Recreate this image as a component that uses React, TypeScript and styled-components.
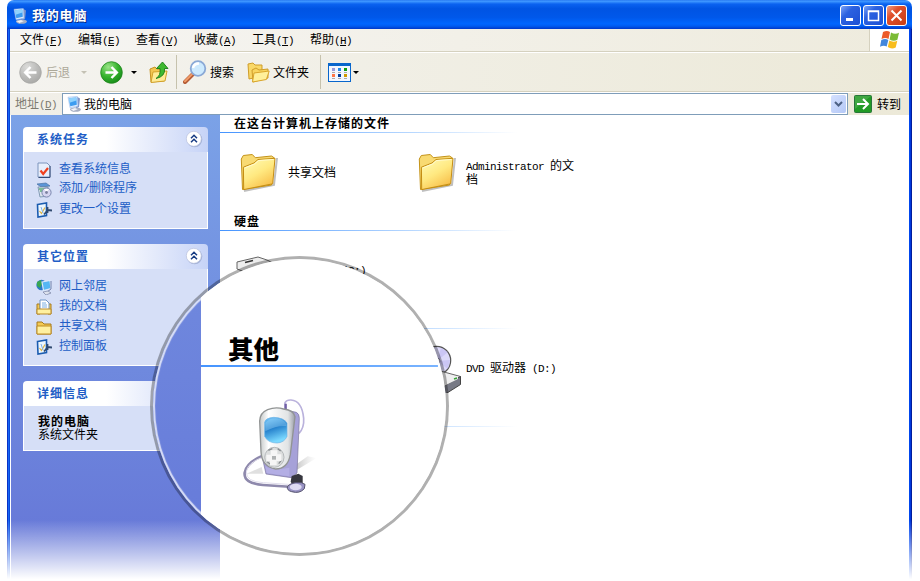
import React from "react";
import styled, { createGlobalStyle } from "styled-components";

const GlobalStyle = createGlobalStyle`
  * { box-sizing: border-box; }
  html, body { margin: 0; background: #fff; }
  body {
    font-family: "Noto Sans CJK SC", sans-serif;
    font-size: 12px;
    line-height: 12px;
    color: #000;
  }
  svg { display: block; flex: none; }
`;

const Screen = styled.div`
  position: relative;
  width: 920px;
  height: 581px;
  overflow: hidden;
`;

const WindowFrame = styled.div`
  display: flex;
  flex-direction: column;
  width: 905px;
  height: 581px;
  margin-left: 7px;
`;

const TitleBar = styled.header`
  display: flex;
  align-items: center;
  flex: none;
  height: 29px;
  padding: 2px 5px 0 5px;
  border-radius: 7px 7px 0 0;
  background: linear-gradient(#2a7cf2 0, #3c95ff 5%, #0a62f0 14%, #0054e3 30%, #0058ea 60%, #0066ff 82%, #005bf0 90%, #0038c8 100%);
`;

const WindowTitle = styled.h1`
  flex: 1;
  margin: -1px 0 0 4px;
  font-size: 13px;
  line-height: 16px;
  letter-spacing: 0.8px;
  font-weight: 700;
  color: #fff;
  text-shadow: 1px 1px 0 #0a2a80;
`;

const CaptionButton = styled.button<{ $close?: boolean }>`
  display: flex;
  align-items: center;
  justify-content: center;
  width: 21px;
  height: 21px;
  margin-left: 2px;
  padding: 0;
  border: 1px solid #fff;
  border-radius: 3px;
  background: ${(p) =>
    p.$close
      ? "linear-gradient(135deg, #f0a088, #e0502c 35%, #c83c14)"
      : "linear-gradient(135deg, #7ca4f8, #2c62e0 35%, #1c4fd4)"};
`;

const Frame = styled.div`
  display: flex;
  flex-direction: column;
  flex: 1;
  min-height: 0;
  padding: 0 3px;
  background:
    linear-gradient(90deg, #0a30c8 1px, #1467f4 1px 2px, #0848dc 2px) left / 3px 100% no-repeat,
    linear-gradient(90deg, #0046ee 1px, #0038dc 1px 2px, #001c9c 2px) right / 3px 100% no-repeat,
    #fff;
`;

const MenuBar = styled.nav`
  display: flex;
  flex: none;
  height: 23px;
  background: linear-gradient(90deg, #f6f5f3, #eeebdd);
  border-bottom: 1px solid #d5d1bf;
`;

const MenuItems = styled.div`
  display: flex;
  flex: 1;
  align-items: center;
  gap: 16px;
  padding-left: 10px;
  border-right: 1px solid #d5d1bf;
`;

const Latin = styled.span`
  font-family: "Liberation Mono", monospace;
  font-size: 11px;
  letter-spacing: -0.6px;
  white-space: pre;
  u { text-underline-offset: 1px; }
`;

const MenuItem = styled.div`
  width: 42px;
  white-space: nowrap;
`;

const FlagBox = styled.div`
  display: flex;
  justify-content: center;
  width: 39px;
  padding-top: 1px;
  background: #fff;
`;

const ToolBar = styled.div`
  display: flex;
  align-items: center;
  flex: none;
  height: 40px;
  padding-left: 9px;
  border-top: 1px solid #fff;
  border-bottom: 1px solid #d5d1bf;
  background: linear-gradient(90deg, #f4f3ef, #ece9d8);
`;

const ToolButton = styled.div<{ $gap: number; $disabled?: boolean; $space?: number }>`
  display: flex;
  align-items: center;
  gap: ${(p) => p.$space ?? 4}px;
  margin-left: ${(p) => p.$gap}px;
  color: ${(p) => (p.$disabled ? "#aca899" : "#000")};
  white-space: nowrap;
`;

const ToolLabel = styled.span`
  margin-top: -1px;
`;

const Caret = styled.span<{ $gap: number; $disabled?: boolean }>`
  width: 0;
  height: 0;
  margin-left: ${(p) => p.$gap}px;
  border: 3px solid transparent;
  border-top-color: ${(p) => (p.$disabled ? "#c4c1b4" : "#000")};
  border-bottom: 0;
`;

const Divider = styled.span<{ $gap: number }>`
  width: 1px;
  height: 34px;
  margin-left: ${(p) => p.$gap}px;
  background: #c6c2ad;
`;

const AddressBar = styled.div`
  display: flex;
  align-items: center;
  flex: none;
  height: 23px;
  padding-left: 5px;
  border-top: 1px solid #fff;
  background: linear-gradient(90deg, #f1efe8, #ece9d8);
`;

const AddressLabel = styled.label`
  width: 47px;
  color: #7c7a70;
  white-space: nowrap;
`;

const AddressField = styled.div`
  display: flex;
  align-items: center;
  width: 786px;
  height: 22px;
  padding: 0 1px 0 3px;
  border: 1px solid #7f9db9;
  background: #fff;
`;

const AddressText = styled.span`
  flex: 1;
  margin-left: 2px;
`;

const DropButton = styled.span`
  display: flex;
  align-items: center;
  justify-content: center;
  width: 15px;
  height: 18px;
  border-radius: 2px;
  background: linear-gradient(135deg, #d4e0ff, #b4c8f6);
`;

const GoButton = styled.div`
  display: flex;
  align-items: center;
  gap: 5px;
  margin-left: 6px;
`;

const Body = styled.main`
  display: flex;
  flex: 1;
  min-height: 0;
  margin-left: 1px;
`;

const SideBar = styled.aside`
  display: flex;
  flex-direction: column;
  gap: 15px;
  width: 209px;
  padding: 12px 12px 0;
  background: linear-gradient(#7ba2e7, #6779d8 90%, #6375d6);
`;

const PanelHeader = styled.div`
  display: flex;
  align-items: center;
  justify-content: space-between;
  height: 25px;
  padding: 0 5px 1px 14px;
  border-radius: 4px 4px 0 0;
  background: linear-gradient(90deg, #fff 45%, #c6d3f7);
`;

const PanelTitle = styled.h2`
  margin: 0;
  font-size: 12px;
  line-height: 14px;
  letter-spacing: 1px;
  color: #215dc6;
`;

const PanelBody = styled.div<{ $details?: boolean }>`
  padding: ${(p) => (p.$details ? "10px 0 10px 14px" : "6px 0 10px 12px")};
  border: 1px solid #fff;
  border-top: 0;
  background: #d6dff7;
`;

const TaskRow = styled.div`
  display: flex;
  align-items: center;
  gap: 7px;
  height: 20px;
  color: #215dc6;
  svg { margin-top: 3px; }
`;

const TaskLabel = styled.span`
  margin-top: -1px;
`;

const DetailName = styled.div`
  margin: -1px 0 1px;
  font-size: 12px;
  letter-spacing: 1px;
  font-weight: 700;
`;

const Content = styled.section`
  flex: 1;
  background: #fff;
`;

const Group = styled.div`
  height: 98px;
`;

const GroupTitle = styled.h3`
  height: 17px;
  margin: 0;
  padding: 1px 0 0 14px;
  font-size: 12px;
  line-height: 14px;
  letter-spacing: 1px;
`;

const Rule = styled.div`
  width: 297px;
  height: 1px;
  background: linear-gradient(90deg, #4594ff, #b8d8ff 65%, #fff);
`;

const Items = styled.div`
  display: grid;
  grid-template-columns: 178px 178px;
  height: 80px;
  align-items: center;
  padding-left: 19px;
`;

const Item = styled.div<{ $column?: number }>`
  grid-column: ${(p) => p.$column ?? "auto"};
  display: flex;
  align-items: center;
`;

const ItemName = styled.div`
  width: 112px;
  margin: -3px 0 0 1px;
`;

const BottomFade = styled.div`
  position: absolute;
  left: 0;
  right: 0;
  bottom: 0;
  height: 61px;
  background: linear-gradient(rgba(255, 255, 255, 0), #fff 97%);
`;

/* Magnifying lens floating above the window */
const Lens = styled.div`
  position: absolute;
  left: 150px;
  top: 256px;
  display: flex;
  width: 299px;
  height: 300px;
  border: 3px solid rgba(0, 0, 0, 0.31);
  border-radius: 50%;
  overflow: hidden;
  background: #fff padding-box;
  &::after {
    content: "";
    position: absolute;
    inset: 0;
    border-radius: 50%;
    box-shadow: inset 0 0 1px 2px rgba(255, 255, 255, 0.75);
  }
`;

const LensSide = styled.div`
  width: 48px;
  background: linear-gradient(#7089de, #667ad9);
`;

const LensMain = styled.div`
  flex: 1;
  padding-top: 74px;
`;

const LensTitle = styled.h2`
  height: 32px;
  margin: 0;
  padding-left: 27px;
  font-size: 25.5px;
  line-height: 29px;
  font-weight: 900;
`;

const LensRule = styled.div`
  width: 237px;
  height: 2px;
  margin-bottom: 30px;
  background: linear-gradient(90deg, #4594ff, #7ab4ff);
`;

const LensPicture = styled.div`
  padding-left: 39px;
`;

const Computer = ({ size = 16 }: { size?: number }) => (
  <svg width={size} height={size} viewBox="0 0 16 16">
    <ellipse cx="9.5" cy="13.6" rx="5.5" ry="2.2" fill="#a6aec2" />
    <path d="M11 .8l3 1.7-1 8.500-3 1.500z" fill="#7f95c8" />
    <path d="M2 1.2L11.300.4l.7 9.800L4 11.800z" fill="#dceafd" stroke="#8fb4ea" strokeWidth=".5" />
    <path d="M2.800 2.200l7.500-.7.500 7.300-6.500 1.400z" fill="#3d9cf0" />
    <path d="M2.800 2.200l7.500-.7.200 3-7 2.200z" fill="#8fd2fd" />
    <path d="M4 13.200l5-1.500 3.500 1.500-5 2z" fill="#f1f3f8" stroke="#9aa4bc" strokeWidth=".5" />
  </svg>
);

const Flag = () => (
  <svg width="20" height="19" viewBox="0 0 20 19">
    <path d="M3 2q4-2 7 0L8.5 9q-3-2-7 0z" fill="#ec5b29" />
    <path d="M11 2.5q4 2.3 8 .3l-1.6 7q-4 2-7.8-.3z" fill="#7bbb35" />
    <path d="M1.3 10q4-2 7 0l-1.6 6.5q-3-1.8-6.7.2z" fill="#4387dc" />
    <path d="M9.3 10.6q4 2.2 8 .2l-1.6 6.7q-4 2-7.9-.4z" fill="#f8bd1c" />
  </svg>
);

const CircleArrow = ({ back }: { back?: boolean }) => (
  <svg width="23" height="23" viewBox="0 0 23 23">
    <defs>
      <radialGradient id={back ? "orbGray" : "orbGreen"} cx=".35" cy=".25" r=".8">
        <stop offset="0" stopColor={back ? "#dcdcda" : "#9be488"} />
        <stop offset=".55" stopColor={back ? "#bdbdbb" : "#37b42f"} />
        <stop offset="1" stopColor={back ? "#a8a8a6" : "#158a19"} />
      </radialGradient>
    </defs>
    <circle cx="11.5" cy="11.5" r="10.8" fill={`url(#${back ? "orbGray" : "orbGreen"})`} stroke={back ? "#a9a9a7" : "#23861f"} strokeWidth=".8" />
    <path
      d={back ? "M17.5 11.5H6.5M11.5 6l-5.3 5.5 5.3 5.5" : "M5.5 11.5h11M11.5 6l5.3 5.5-5.3 5.5"}
      fill="none"
      stroke="#fff"
      strokeWidth="2.5"
    />
  </svg>
);

const UpFolder = () => (
  <svg width="20" height="23" viewBox="0 0 20 23">
    <path d="M1 8l5-2 2 2h7v12l-13 1z" fill="#f3c650" stroke="#c69323" />
    <path d="M4 11l14-1-2 10-14 1.5z" fill="#ffeb96" stroke="#d2a12a" />
    <path d="M7 17.500q5-3 4-10H7.500L13.500 1 19 7.500h-3.500q1 8-8.500 10z" fill="#3fb931" stroke="#187e17" strokeWidth=".9" />
  </svg>
);

const Search = () => (
  <svg width="24" height="24" viewBox="0 0 24 24">
    <path d="M2 22l8-8" stroke="#b35a35" strokeWidth="4" strokeLinecap="round" />
    <path d="M2 21.2l7.5-7.5" stroke="#f09b67" strokeWidth="2" strokeLinecap="round" />
    <circle cx="15" cy="8.5" r="7.3" fill="#cdeafe" stroke="#8ba9d6" strokeWidth="1.8" />
    <path d="M10 8q1-4.5 6-4.5" stroke="#fff" strokeWidth="2.5" fill="none" />
  </svg>
);

const Folders = () => (
  <svg width="23" height="21" viewBox="0 0 23 21">
    <path d="M1 2l5-1 2 2h7v11L2 17z" fill="#f9d867" stroke="#cf9d2a" />
    <path d="M5 8l4-2 3 2 9-1v9L6 20z" fill="#f8d55f" stroke="#cf9d2a" />
    <path d="M7 11l15.2-2-2.8 8.5L5.5 20z" fill="#fff09a" stroke="#d9a62c" />
  </svg>
);

const Views = () => (
  <svg width="23" height="19" viewBox="0 0 23 19">
    <rect x=".5" y=".5" width="22" height="18" fill="#f2f7ff" stroke="#0866cc" />
    <path d="M0 0h23v3H0z" fill="#0866cc" />
    {["#9a9ad8", "#2689e6", "#10a010", "#ff7747", "#003c9c", "#d09a00"].map((color, i) => (
      <g key={color} fill={color}>
        <rect x={4 + (i % 3) * 6} y={5 + Math.floor(i / 3) * 6} width="3" height="3" />
        <rect x={4 + (i % 3) * 6} y={9 + Math.floor(i / 3) * 6} width="3" height="1" fill="#aaa" />
      </g>
    ))}
  </svg>
);

const GoArrow = () => (
  <svg width="18" height="18" viewBox="0 0 18 18">
    <rect x=".5" y=".5" width="17" height="17" rx="1" fill="#219a25" stroke="#28763a" />
    <path d="M1 1h16L1 14z" fill="#64b864" opacity=".45" />
    <path d="M3 9h11M9 4l5 5-5 5" fill="none" stroke="#fff" strokeWidth="2" />
  </svg>
);

const Chevron = () => (
  <svg width="18" height="18" viewBox="0 0 18 18">
    <circle cx="9.6" cy="9.6" r="7.7" fill="#9aa9cf" opacity=".8" />
    <circle cx="8.8" cy="8.8" r="7.5" fill="#fff" stroke="#b8c0dc" strokeWidth=".7" />
    <path d="M6 8.3l3-3 3 3M6 12.3l3-3 3 3" fill="none" stroke="#173b83" strokeWidth="1.5" />
  </svg>
);

type TaskIcon = "info" | "programs" | "settings" | "network" | "documents" | "folder";

const taskArt: Record<TaskIcon, React.ReactNode> = {
  info: (
    <>
      <path d="M2 1h9l3 3v11H2z" fill="#e6eefc" stroke="#7c94bc" />
      <path d="M14 4v11.500H2.500" fill="none" stroke="#344a75" />
      <path d="M4.5 8.5l2.7 3.5L12 6" fill="none" stroke="#ee401f" strokeWidth="2.2" />
    </>
  ),
  programs: (
    <>
      <path d="M1 2l9-1 4 3-9 1z" fill="#5b95d7" stroke="#4a73a5" strokeWidth=".7" />
      <path d="M2 5h10v9l-8 1z" fill="#dde6ee" stroke="#6c89a5" strokeWidth=".8" />
      <path d="M3 7h6M4 9h4" stroke="#5bb177" strokeWidth="1.5" />
      <circle cx="10.5" cy="10.5" r="4.6" fill="#d5d5f0" stroke="#7b87af" />
      <path d="M10.5 10.5L8 7h5z" fill="#fff" />
      <circle cx="10.5" cy="10.5" r="1.4" fill="#7b80a0" />
    </>
  ),
  settings: (
    <>
      <path d="M1.500 2.500l9-1.500v12.500l-8.500 1.500z" fill="#eaf6ff" stroke="#1b5cb0" strokeWidth="1.6" />
      <path d="M3.500 9l2 2.500 3.500-6" fill="none" stroke="#e2b340" strokeWidth="1.2" />
      <path d="M5 5l2 6" fill="none" stroke="#7fb0e6" />
      <path d="M8 12.500l4-4.500 4 .5M11.500 5v6" fill="none" stroke="#304a70" strokeWidth="1.800" />
    </>
  ),
  network: (
    <>
      <circle cx="5.5" cy="6" r="5.2" fill="#2d79c8" />
      <path d="M1 3l4-2 1 4-2 4-3-2z" fill="#39a653" />
      <path d="M6 3l8-1.5 1 8-7.5 2z" fill="#55b7f4" stroke="#dbe8fa" strokeWidth="1.2" />
      <path d="M15 2v8l-4 3" fill="none" stroke="#7380ac" />
      <path d="M7 13l5-1 3 2-5 2z" fill="#dce1ed" stroke="#7883a4" strokeWidth=".7" />
    </>
  ),
  documents: (
    <>
      <path d="M1 5h3v10H1zM12 5h3v10h-3z" fill="#f4cb55" stroke="#a77b20" />
      <path d="M4 1h6l3 3v8H4z" fill="#fff" stroke="#7096c7" />
      <path d="M6 4h4M6 6h5M6 8h5" stroke="#7baee3" />
      <path d="M1 10h14v5H1z" fill="#fff0a0" stroke="#b98b2a" />
    </>
  ),
  folder: (
    <>
      <path d="M1 3h5l2 2h7v10H1z" fill="#f3c953" stroke="#a6791c" />
      <path d="M1 7h14v8H1z" fill="#fff0a0" stroke="#bd8c24" />
    </>
  ),
};

const TaskGlyph = ({ kind }: { kind: TaskIcon }) => (
  <svg width="16" height="16" viewBox="0 0 16 16">{taskArt[kind]}</svg>
);

const FolderLarge = () => (
  <svg width="48" height="48" viewBox="0 0 48 48">
    <defs>
      <linearGradient id="folderFace" x2=".6" y2="1">
        <stop stopColor="#fffdbb" />
        <stop offset=".55" stopColor="#ffe981" />
        <stop offset="1" stopColor="#f8c04b" />
      </linearGradient>
    </defs>
    <path d="M5 42l30-6 3-27" fill="none" stroke="#8b8b8b" strokeWidth="2" opacity=".55" />
    <path d="M2.3 10l2-3.5 9-1 3 3.2L32.5 7l3 2-3 27L3.5 40.5z" fill="#f8da72" stroke="#c49319" />
    <path d="M4.4 18.2L15 14l4-3.500 17-1.200-2.300 25.500-29 5.800z" fill="url(#folderFace)" stroke="#c58d12" />
    <path d="M5.5 19l10-4 4-3.5 15-1" fill="none" stroke="#fffbd0" />
  </svg>
);

const DriveTray = () => (
  <>
    <path d="M1 18L20 9l22 6-19 11z" fill="#efeff0" stroke="#666" />
    <path d="M1 18l22 8v9L1 26z" fill="#a1a1a8" stroke="#555" />
    <path d="M23 26l19-11v8L23 35z" fill="#777985" stroke="#444" />
    <path d="M8 14l12-4" stroke="#333" strokeWidth="2" />
  </>
);

const HardDisk = () => (
  <svg width="48" height="48" viewBox="0 0 48 48" overflow="visible">
    <path d="M-2 22v-7l21-5 9 3 14 7-20 11z" fill="#ededed" stroke="#646464" />
    <path d="M6 15.500l8-2" stroke="#333" strokeWidth="1.5" />
  </svg>
);

const DvdDrive = () => (
  <svg width="48" height="48" viewBox="0 0 48 48">
    <circle cx="19.500" cy="15.500" r="14.2" fill="#dcd9fa" stroke="#555" strokeWidth="1.2" />
    <path d="M20 16l4-13 7 4zM20 16l13-1-2 9z" fill="#b9b4f0" opacity=".5" />
    <circle cx="20" cy="16" r="3" fill="#fff" stroke="#8986aa" />
    <g transform="translate(1.500 16.500)"><DriveTray /></g>
    <path d="M27 41l14-7v-3l-14 6z" fill="#eee" />
    <path d="M37 34l3-1" stroke="#35a337" strokeWidth="1.5" />
  </svg>
);

const MediaPlayer = () => (
  <svg width="80" height="100" viewBox="60 230 240 300">
    <defs>
      <linearGradient id="playerShell">
        <stop stopColor="#c4c8c8" />
        <stop offset=".25" stopColor="#fff" />
        <stop offset=".8" stopColor="#e1e4e5" />
        <stop offset="1" stopColor="#9b9ea9" />
      </linearGradient>
      <linearGradient id="playerScreen" x2=".3" y2="1">
        <stop stopColor="#78c9fb" />
        <stop offset=".5" stopColor="#2682cd" />
        <stop offset="1" stopColor="#7bd9ff" />
      </linearGradient>
      <linearGradient id="playerShadow" x2="1" y2="0">
        <stop stopColor="#777" stopOpacity=".5" />
        <stop offset="1" stopColor="#bbb" stopOpacity="0" />
      </linearGradient>
    </defs>
    <path d="M220 455l70-42-27-5-40 28z" fill="url(#playerShadow)" />
    <path d="M80 460l45-20 5 20z" fill="#bbb" opacity=".45" />
    <path d="M195 267v-20q5-9 18-8 33 2 38 55 2 28-14 45" fill="none" stroke="#bab2dc" strokeWidth="5" />
    <path d="M197 268v-18" stroke="#7160a6" strokeWidth="7" />
    <path d="M125 408q-45 19-51 49-4 32 55 37l90 6" fill="none" stroke="#8e89ac" strokeWidth="8" />
    <path d="M125 412q-43 16-46 43-1 29 51 32l88 6" fill="none" stroke="#e0ddec" strokeWidth="3" />
    <path d="M192 268l37 8q9 4 9 18l-7 164-17 14-76-11-10-45 65 3z" fill="#a6a1d8" stroke="#77719b" strokeWidth="2" />
    <path d="M136 438q24 14 72 4v26l-68-10z" fill="#b3aee4" />
    <path d="M119 302q1-25 24-34 24-10 48-2 31 4 34 23l-14 114q-8 43-44 43-42-8-44-52z" fill="url(#playerShell)" stroke="#919494" strokeWidth="4" />
    <path d="M134 306q2-13 27-15 30 1 40 17v40q-8 19-30 20-28 0-37-20z" fill="url(#playerScreen)" stroke="#6cb4e6" strokeWidth="2" />
    <path d="M136 307q14-14 32-13 20 2 31 15v8q-30-2-63 16z" fill="#b9e8ff" opacity=".3" />
    <ellipse cx="163" cy="411" rx="29" ry="30" fill="#dcdede" stroke="#b4b8ba" strokeWidth="3" />
    <path d="M145 390l12-5M173 385l9 7M142 425l10 7M176 430l8-10" stroke="#888d90" strokeWidth="4" />
    <path d="M152 390h20v12h12v20h-14v12h-20v-12h-11v-19h13z" fill="#f6f6f6" />
    <rect x="156" y="407" width="12" height="11" fill="#b0b3b4" />
    <path d="M215 467l20-7 13 7v26l-29 3-7-12z" fill="#37373f" />
    <path d="M202 499q12-15 42-12l11 5-2 13q-14 16-38 9-15-4-13-15z" fill="#9892c4" stroke="#55536d" strokeWidth="3" />
    <ellipse cx="227" cy="500" rx="18" ry="10" fill="#dedbf2" />
  </svg>
);

const menus = [
  ["文件", "F"],
  ["编辑", "E"],
  ["查看", "V"],
  ["收藏", "A"],
  ["工具", "T"],
  ["帮助", "H"],
];

const panels: { title: string; tasks: [TaskIcon, React.ReactNode][] }[] = [
  {
    title: "系统任务",
    tasks: [
      ["info", "查看系统信息"],
      ["programs", <>添加<Latin>/</Latin>删除程序</>],
      ["settings", "更改一个设置"],
    ],
  },
  {
    title: "其它位置",
    tasks: [
      ["network", "网上邻居"],
      ["documents", "我的文档"],
      ["folder", "共享文档"],
      ["settings", "控制面板"],
    ],
  },
];

const Shortcut = ({ letter }: { letter: string }) => (
  <Latin>(<u>{letter}</u>)</Latin>
);

export default function App() {
  return (
    <Screen>
      <GlobalStyle />
      <WindowFrame>
        <TitleBar>
          <Computer />
          <WindowTitle>我的电脑</WindowTitle>
          <CaptionButton aria-label="最小化">
            <svg width="13" height="13"><path d="M2 9h7v3H2z" fill="#fff" /></svg>
          </CaptionButton>
          <CaptionButton aria-label="最大化">
            <svg width="13" height="13"><path d="M1.5 2h10v9.500h-10zM1 2.500h11" fill="none" stroke="#fff" strokeWidth="1.5" /></svg>
          </CaptionButton>
          <CaptionButton $close aria-label="关闭">
            <svg width="13" height="13"><path d="M1.500 1.500l10 10m0-10l-10 10" stroke="#fff" strokeWidth="2" /></svg>
          </CaptionButton>
        </TitleBar>
        <Frame>
          <MenuBar>
            <MenuItems>
              {menus.map(([name, key]) => (
                <MenuItem key={key}>{name}<Shortcut letter={key} /></MenuItem>
              ))}
            </MenuItems>
            <FlagBox><Flag /></FlagBox>
          </MenuBar>
          <ToolBar>
            <ToolButton $gap={0} $disabled><CircleArrow back /><ToolLabel>后退</ToolLabel></ToolButton>
            <Caret $gap={11} $disabled />
            <ToolButton $gap={13}><CircleArrow /></ToolButton>
            <Caret $gap={8} />
            <ToolButton $gap={12}><UpFolder /></ToolButton>
            <Divider $gap={7} />
            <ToolButton $gap={6} $space={3}><Search /><ToolLabel>搜索</ToolLabel></ToolButton>
            <ToolButton $gap={13} $space={3}><Folders /><ToolLabel>文件夹</ToolLabel></ToolButton>
            <Divider $gap={11} />
            <ToolButton $gap={7}><Views /></ToolButton>
            <Caret $gap={2} />
          </ToolBar>
          <AddressBar>
            <AddressLabel>地址<Shortcut letter="D" /></AddressLabel>
            <AddressField>
              <Computer />
              <AddressText>我的电脑</AddressText>
              <DropButton>
                <svg width="9" height="7"><path d="M1 1l3.500 3.500L8 1" fill="none" stroke="#4d6185" strokeWidth="2" /></svg>
              </DropButton>
            </AddressField>
            <GoButton><GoArrow />转到</GoButton>
          </AddressBar>
          <Body>
            <SideBar>
              {panels.map((panel) => (
                <section key={panel.title}>
                  <PanelHeader>
                    <PanelTitle>{panel.title}</PanelTitle>
                    <Chevron />
                  </PanelHeader>
                  <PanelBody>
                    {panel.tasks.map(([icon, label]) => (
                      <TaskRow key={icon}><TaskGlyph kind={icon} /><TaskLabel>{label}</TaskLabel></TaskRow>
                    ))}
                  </PanelBody>
                </section>
              ))}
              <section>
                <PanelHeader><PanelTitle>详细信息</PanelTitle></PanelHeader>
                <PanelBody $details>
                  <DetailName>我的电脑</DetailName>
                  <div>系统文件夹</div>
                </PanelBody>
              </section>
            </SideBar>
            <Content>
              <Group>
                <GroupTitle>在这台计算机上存储的文件</GroupTitle>
                <Rule />
                <Items>
                  <Item><FolderLarge /><ItemName>共享文档</ItemName></Item>
                  <Item><FolderLarge /><ItemName><Latin>Administrator </Latin>的文档</ItemName></Item>
                </Items>
              </Group>
              <Group>
                <GroupTitle>硬盘</GroupTitle>
                <Rule />
                <Items>
                  <Item><HardDisk /><ItemName>本地磁盘<Latin> (C:)</Latin></ItemName></Item>
                </Items>
              </Group>
              <Group>
                <GroupTitle />
                <Rule />
                <Items>
                  <Item $column={2}><DvdDrive /><ItemName><Latin>DVD </Latin>驱动器<Latin> (D:)</Latin></ItemName></Item>
                </Items>
              </Group>
              <Group>
                <GroupTitle />
                <Rule />
              </Group>
            </Content>
          </Body>
        </Frame>
      </WindowFrame>
      <BottomFade />
      <Lens>
        <LensSide />
        <LensMain>
          <LensTitle>其他</LensTitle>
          <LensRule />
          <LensPicture><MediaPlayer /></LensPicture>
        </LensMain>
      </Lens>
    </Screen>
  );
}
